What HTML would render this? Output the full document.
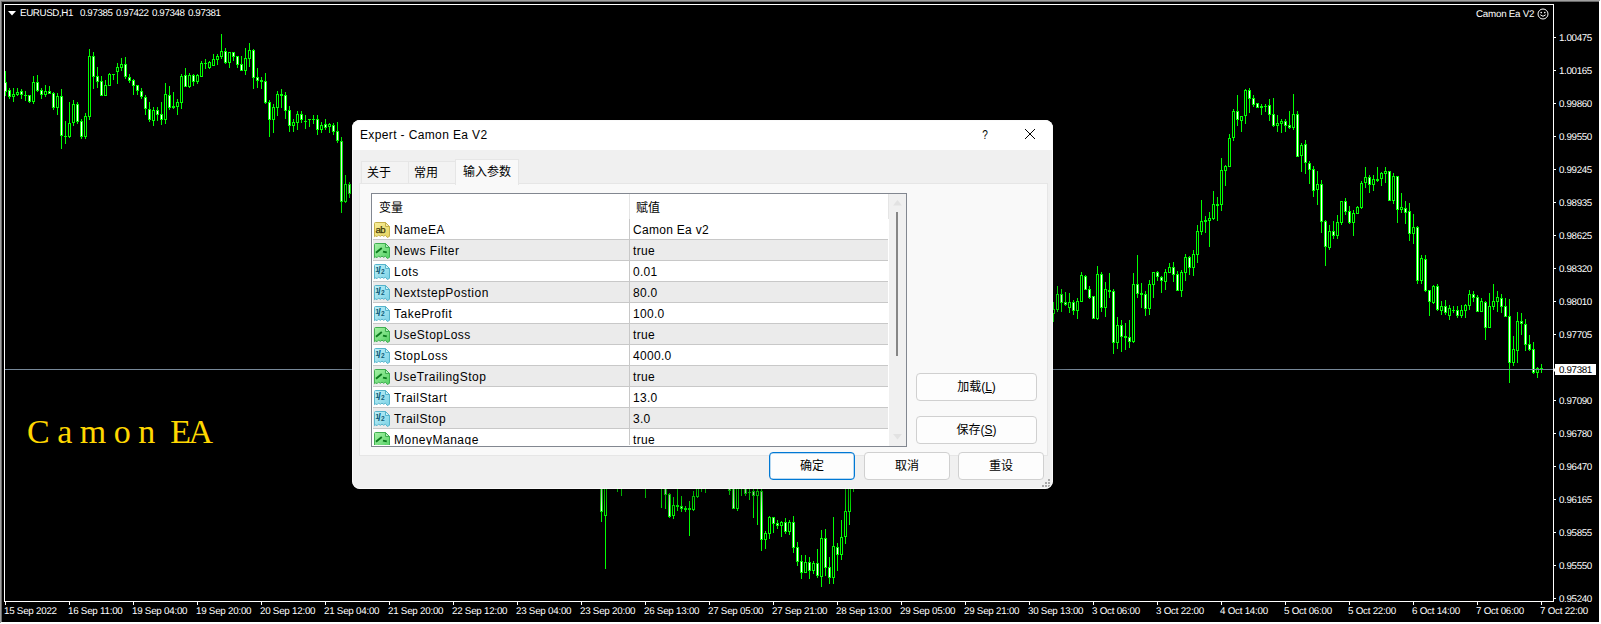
<!DOCTYPE html>
<html lang="zh-CN">
<head>
<meta charset="utf-8">
<title>Expert - Camon Ea V2</title>
<style>
*{box-sizing:border-box;margin:0;padding:0}
html,body{width:1601px;height:624px;overflow:hidden;background:#000}
body{position:relative;font-family:"Liberation Sans","Noto Sans CJK SC",sans-serif;color:#fff}
#win{position:absolute;left:0;top:0;width:1601px;height:624px;background:#000;overflow:hidden}
/* outer 3D edge */
.e{position:absolute;display:block}
#eL0{left:0;top:0;width:1px;height:623px;background:#a0a0a0;z-index:2}
#eL1{left:1px;top:1px;width:1px;height:621px;background:#696969;z-index:2}
#eT0{left:0;top:0;width:1600px;height:1px;background:#a0a0a0;z-index:2}
#eT1{left:1px;top:1px;width:1598px;height:1px;background:#696969;z-index:2}
#eR{left:1599px;top:0;width:2px;height:624px;background:#fff}
#eB{left:0;top:622px;width:1601px;height:2px;background:#fff}
#eC{left:1599px;top:0;width:2px;height:2px;background:#a0a0a0}
#eD{left:0;top:622px;width:2px;height:2px;background:#a0a0a0}
/* chart frame */
#frame{position:absolute;left:4px;top:4px;width:1550px;height:598px;border:1px solid #fff;pointer-events:none}
#chart{position:absolute;left:0;top:0}
.ct{text-rendering:geometricPrecision;position:absolute;font-size:9.8px;line-height:11px;white-space:pre;color:#fff;letter-spacing:-.4px}
.pt{position:absolute;left:1554px;width:2px;height:1px;background:#fff;display:block}
.pl{text-rendering:geometricPrecision;position:absolute;left:1559px;font-size:9.8px;line-height:11px;height:11px;white-space:pre;color:#fff;letter-spacing:-.35px}
.tt{position:absolute;top:602px;width:1px;height:3px;background:#fff;display:block}
.tl{text-rendering:geometricPrecision;position:absolute;top:606px;font-size:9.8px;line-height:11px;height:11px;white-space:pre;color:#fff;letter-spacing:-.25px;margin-left:-1px}
#bid{position:absolute;left:5px;top:369px;width:1548px;height:1px;background:#778899}
#bidbox{text-rendering:geometricPrecision;position:absolute;left:1555px;top:364px;width:41px;height:11px;background:#fff;color:#000;font-size:9.8px;line-height:11px;padding-left:4px;padding-top:1px;white-space:pre;letter-spacing:-.35px}
#bidarr{position:absolute;left:1553px;top:367px;width:0;height:0;border-right:3px solid #fff;border-top:3px solid transparent;border-bottom:3px solid transparent}
#logo{position:absolute;left:27px;top:413px;font-family:"Liberation Serif",serif;font-size:34px;line-height:38px;color:#ffd700;white-space:pre;word-spacing:-1px}
/* dialog */
#dlg{position:absolute;left:352px;top:120px;width:701px;height:369px;background:#f0f0f0;border-radius:8px;overflow:hidden;box-shadow:0 10px 26px 2px rgba(0,0,0,.42);color:#000;font-size:12px}
#ttl{position:absolute;left:0;top:0;width:701px;height:30px;background:#fff}
#ttl span{position:absolute;left:8px;top:7px;line-height:16px;font-size:12px;letter-spacing:.37px;white-space:pre}
.tab{position:absolute;top:41px;height:23px;background:#f3f3f3;border:1px solid #e6e6e6;border-bottom:none;font-size:12px;line-height:14px;text-align:left;white-space:pre}
.tab span{position:absolute;left:5px;top:4px}
#tabA{top:39px;height:26px;background:#f9f9f9;z-index:3}
#tabA span{left:7px;top:5px}
#page{position:absolute;left:7px;top:63px;width:689px;height:273px;background:#f9f9f9;border:1px solid #e6e6e6;z-index:2}
#list{position:absolute;left:19px;top:73px;width:536px;height:254px;background:#fff;border:1px solid #828790;overflow:hidden;z-index:4}
#hdr{position:absolute;left:0;top:0;width:534px;height:25px;background:#fff}
#hdr span{position:absolute;top:7px;font-size:12px;line-height:14px;white-space:pre}
#hdr i{position:absolute;top:0;width:1px;height:25px;background:#e5e5e5;display:block}
.row{position:absolute;left:1px;width:515px;height:21px;border-bottom:1px solid #c8c8c8;background:#fff}
.row.alt{background:#ebebeb}
.row .ic{position:absolute;left:1px;top:3px}
.row .nm{position:absolute;left:21px;top:4px;line-height:14px;font-size:12px;letter-spacing:.5px;white-space:pre}
.row .vl{position:absolute;left:260px;top:4px;line-height:14px;font-size:12px;letter-spacing:.3px;white-space:pre}
#coldiv{position:absolute;left:257px;top:25px;width:1px;height:229px;background:#c8c8c8}
#sb{position:absolute;left:517px;top:0;width:17px;height:252px;background:#f0f0f0}
#sb b{position:absolute;left:7px;top:18px;width:2px;height:144px;background:#868686;display:block}
.btn{position:absolute;height:28px;background:#fdfdfd;border:1px solid #d0d0d0;border-radius:4px;font-size:12px;line-height:26px;text-align:center;white-space:pre}
.btn u{text-decoration:underline}
#ok{border:1px solid #0078d4;box-shadow:inset 0 0 0 .5px rgba(0,120,212,.55)}
#rim{position:absolute;left:0;top:0;width:701px;height:369px;border:1px solid #fafafa;border-radius:8px;z-index:9;pointer-events:none}
</style>
</head>
<body>
<div id="win">
<svg id="chart" width="1601" height="624" viewBox="0 0 1601 624" shape-rendering="crispEdges">
<path fill="#00ff00" d="M5 71h1v25h-1zM9 88h1v11h-1zM13 88h1v14h-1zM17 88h1v8h-1zM21 89h1v10h-1zM25 91h1v10h-1zM29 95h1v8h-1zM33 76h1v28h-1zM37 75h1v17h-1zM41 88h1v11h-1zM45 85h1v12h-1zM49 86h1v8h-1zM53 92h1v18h-1zM57 93h1v22h-1zM61 89h1v60h-1zM65 121h1v23h-1zM69 102h1v36h-1zM73 100h1v26h-1zM77 102h1v22h-1zM81 119h1v20h-1zM85 113h1v26h-1zM89 49h1v71h-1zM93 52h1v37h-1zM97 67h1v21h-1zM101 76h1v20h-1zM105 80h1v16h-1zM109 73h1v13h-1zM113 74h1v6h-1zM117 63h1v21h-1zM121 58h1v13h-1zM125 57h1v22h-1zM129 74h1v9h-1zM133 79h1v16h-1zM137 85h1v10h-1zM141 88h1v11h-1zM145 95h1v20h-1zM149 102h1v20h-1zM153 107h1v19h-1zM157 107h1v14h-1zM161 102h1v23h-1zM165 83h1v41h-1zM169 86h1v24h-1zM173 92h1v17h-1zM177 99h1v16h-1zM181 74h1v35h-1zM185 68h1v19h-1zM189 73h1v15h-1zM193 74h1v12h-1zM197 74h1v10h-1zM201 61h1v16h-1zM205 59h1v10h-1zM209 61h1v8h-1zM213 54h1v12h-1zM217 54h1v11h-1zM221 34h1v25h-1zM225 48h1v16h-1zM229 52h1v16h-1zM233 52h1v9h-1zM237 56h1v12h-1zM241 56h1v15h-1zM245 48h1v27h-1zM249 43h1v24h-1zM253 49h1v40h-1zM257 68h1v20h-1zM261 77h1v12h-1zM265 73h1v31h-1zM269 100h1v37h-1zM273 104h1v29h-1zM277 91h1v25h-1zM281 89h1v19h-1zM285 92h1v27h-1zM289 106h1v26h-1zM293 119h1v13h-1zM297 111h1v19h-1zM301 111h1v12h-1zM305 115h1v14h-1zM309 119h1v8h-1zM313 115h1v9h-1zM317 115h1v20h-1zM321 122h1v11h-1zM325 119h1v11h-1zM329 123h1v10h-1zM333 123h1v12h-1zM337 122h1v21h-1zM341 137h1v76h-1zM345 175h1v28h-1zM349 182h1v16h-1zM601 480h1v42h-1zM605 480h1v89h-1zM617 480h1v12h-1zM621 480h1v16h-1zM645 480h1v18h-1zM661 480h1v28h-1zM665 480h1v29h-1zM669 493h1v25h-1zM673 497h1v22h-1zM677 480h1v31h-1zM681 496h1v16h-1zM685 506h1v6h-1zM689 501h1v35h-1zM693 491h1v20h-1zM697 480h1v18h-1zM701 480h1v12h-1zM705 480h1v13h-1zM729 480h1v15h-1zM733 480h1v29h-1zM737 480h1v31h-1zM741 480h1v16h-1zM745 480h1v16h-1zM749 480h1v20h-1zM753 480h1v38h-1zM757 480h1v45h-1zM761 480h1v71h-1zM765 531h1v18h-1zM769 516h1v23h-1zM773 517h1v16h-1zM777 520h1v9h-1zM781 521h1v16h-1zM785 518h1v16h-1zM789 520h1v15h-1zM793 516h1v37h-1zM797 542h1v24h-1zM801 555h1v24h-1zM805 555h1v18h-1zM809 557h1v22h-1zM813 561h1v13h-1zM817 549h1v29h-1zM821 530h1v57h-1zM825 529h1v47h-1zM829 557h1v27h-1zM833 517h1v67h-1zM837 543h1v28h-1zM841 520h1v40h-1zM845 480h1v64h-1zM849 480h1v45h-1zM853 480h1v12h-1zM1053 302h1v20h-1zM1057 286h1v26h-1zM1061 289h1v23h-1zM1065 292h1v14h-1zM1069 293h1v20h-1zM1073 300h1v15h-1zM1077 298h1v21h-1zM1081 272h1v30h-1zM1085 275h1v15h-1zM1089 286h1v13h-1zM1093 296h1v23h-1zM1097 266h1v54h-1zM1101 272h1v40h-1zM1105 282h1v35h-1zM1109 273h1v25h-1zM1113 289h1v65h-1zM1117 317h1v32h-1zM1121 320h1v32h-1zM1125 323h1v27h-1zM1129 320h1v28h-1zM1133 273h1v70h-1zM1137 255h1v43h-1zM1141 283h1v25h-1zM1145 291h1v25h-1zM1149 280h1v35h-1zM1153 272h1v26h-1zM1157 271h1v10h-1zM1161 276h1v17h-1zM1165 269h1v21h-1zM1169 263h1v10h-1zM1173 262h1v20h-1zM1177 271h1v20h-1zM1181 270h1v27h-1zM1185 254h1v27h-1zM1189 256h1v19h-1zM1193 250h1v26h-1zM1197 225h1v38h-1zM1201 200h1v35h-1zM1205 216h1v17h-1zM1209 212h1v35h-1zM1213 191h1v29h-1zM1217 197h1v24h-1zM1221 158h1v53h-1zM1225 165h1v21h-1zM1229 134h1v33h-1zM1233 109h1v32h-1zM1237 95h1v31h-1zM1241 116h1v16h-1zM1245 89h1v35h-1zM1249 88h1v25h-1zM1253 95h1v12h-1zM1257 103h1v5h-1zM1261 104h1v11h-1zM1265 104h1v8h-1zM1269 99h1v22h-1zM1273 98h1v29h-1zM1277 115h1v17h-1zM1281 119h1v14h-1zM1285 119h1v13h-1zM1289 111h1v18h-1zM1293 94h1v36h-1zM1297 111h1v46h-1zM1301 143h1v29h-1zM1305 140h1v34h-1zM1309 161h1v23h-1zM1313 166h1v31h-1zM1317 171h1v34h-1zM1321 180h1v53h-1zM1325 220h1v46h-1zM1329 225h1v25h-1zM1333 221h1v18h-1zM1337 215h1v24h-1zM1341 201h1v24h-1zM1345 198h1v17h-1zM1349 206h1v18h-1zM1353 210h1v26h-1zM1357 206h1v8h-1zM1361 181h1v28h-1zM1365 167h1v21h-1zM1369 175h1v18h-1zM1373 175h1v16h-1zM1377 167h1v15h-1zM1381 172h1v14h-1zM1385 167h1v16h-1zM1389 171h1v30h-1zM1393 173h1v31h-1zM1397 176h1v47h-1zM1401 193h1v20h-1zM1405 201h1v23h-1zM1409 203h1v38h-1zM1413 214h1v30h-1zM1417 226h1v58h-1zM1421 255h1v29h-1zM1425 255h1v37h-1zM1429 290h1v26h-1zM1433 285h1v19h-1zM1437 284h1v27h-1zM1441 301h1v14h-1zM1445 300h1v15h-1zM1449 305h1v15h-1zM1453 306h1v7h-1zM1457 306h1v12h-1zM1461 305h1v13h-1zM1465 304h1v14h-1zM1469 290h1v20h-1zM1473 291h1v11h-1zM1477 295h1v17h-1zM1481 298h1v14h-1zM1485 301h1v39h-1zM1489 293h1v35h-1zM1493 284h1v26h-1zM1497 291h1v21h-1zM1501 294h1v19h-1zM1505 298h1v19h-1zM1509 299h1v84h-1zM1513 336h1v30h-1zM1517 312h1v51h-1zM1521 313h1v22h-1zM1525 319h1v32h-1zM1529 335h1v16h-1zM1533 342h1v32h-1zM1537 367h1v11h-1zM1541 364h1v9h-1zM4 82h3v10h-3zM8 90h3v7h-3zM12 94h3v3h-3zM16 92h3v3h-3zM20 91h3v4h-3zM24 95h3v1h-3zM28 95h3v7h-3zM32 82h3v20h-3zM36 82h3v9h-3zM40 90h3v5h-3zM44 91h3v4h-3zM48 91h3v3h-3zM52 93h3v15h-3zM56 96h3v12h-3zM60 96h3v40h-3zM64 136h3v1h-3zM68 123h3v14h-3zM72 104h3v19h-3zM76 104h3v18h-3zM80 121h3v16h-3zM84 116h3v21h-3zM88 56h3v61h-3zM92 56h3v21h-3zM96 76h3v6h-3zM100 81h3v15h-3zM104 85h3v11h-3zM108 74h3v12h-3zM112 74h3v1h-3zM116 67h3v5h-3zM120 64h3v4h-3zM124 64h3v13h-3zM128 77h3v4h-3zM132 80h3v6h-3zM136 85h3v6h-3zM140 91h3v6h-3zM144 97h3v12h-3zM148 109h3v11h-3zM152 110h3v11h-3zM156 110h3v5h-3zM160 114h3v6h-3zM164 94h3v26h-3zM168 95h3v13h-3zM172 106h3v2h-3zM176 102h3v5h-3zM180 76h3v27h-3zM184 75h3v12h-3zM188 75h3v12h-3zM192 75h3v7h-3zM196 75h3v7h-3zM200 63h3v14h-3zM204 63h3v1h-3zM208 62h3v6h-3zM212 59h3v7h-3zM216 56h3v4h-3zM220 51h3v6h-3zM224 51h3v12h-3zM228 52h3v11h-3zM232 52h3v5h-3zM236 56h3v9h-3zM240 64h3v7h-3zM244 58h3v13h-3zM248 50h3v9h-3zM252 50h3v28h-3zM256 77h3v4h-3zM260 80h3v2h-3zM264 81h3v22h-3zM268 102h3v18h-3zM272 107h3v13h-3zM276 94h3v14h-3zM280 94h3v2h-3zM284 95h3v16h-3zM288 110h3v16h-3zM292 122h3v4h-3zM296 114h3v9h-3zM300 114h3v6h-3zM304 121h3v1h-3zM308 119h3v1h-3zM312 119h3v1h-3zM316 119h3v11h-3zM320 125h3v5h-3zM324 124h3v4h-3zM328 124h3v3h-3zM332 125h3v7h-3zM336 131h3v10h-3zM340 141h3v61h-3zM344 184h3v18h-3zM348 184h3v10h-3zM600 480h3v32h-3zM604 480h3v36h-3zM616 480h3v1h-3zM620 480h3v1h-3zM644 480h3v1h-3zM660 480h3v1h-3zM664 480h3v15h-3zM668 494h3v23h-3zM672 505h3v11h-3zM676 505h3v2h-3zM680 506h3v3h-3zM684 508h3v2h-3zM688 508h3v2h-3zM692 496h3v14h-3zM696 480h3v17h-3zM700 480h3v1h-3zM704 480h3v1h-3zM728 480h3v11h-3zM732 480h3v29h-3zM736 480h3v29h-3zM740 480h3v1h-3zM744 480h3v14h-3zM748 492h3v1h-3zM752 491h3v5h-3zM756 491h3v5h-3zM760 491h3v49h-3zM764 533h3v7h-3zM768 517h3v17h-3zM772 517h3v7h-3zM776 523h3v3h-3zM780 522h3v4h-3zM784 522h3v10h-3zM788 522h3v10h-3zM792 522h3v26h-3zM796 547h3v15h-3zM800 561h3v12h-3zM804 562h3v11h-3zM808 562h3v9h-3zM812 563h3v8h-3zM816 563h3v13h-3zM820 538h3v39h-3zM824 538h3v30h-3zM828 567h3v11h-3zM832 546h3v32h-3zM836 547h3v8h-3zM840 537h3v18h-3zM844 511h3v26h-3zM848 480h3v32h-3zM852 480h3v1h-3zM1052 309h3v5h-3zM1056 294h3v16h-3zM1060 294h3v9h-3zM1064 302h3v3h-3zM1068 302h3v6h-3zM1072 302h3v9h-3zM1076 301h3v10h-3zM1080 275h3v27h-3zM1084 276h3v14h-3zM1088 289h3v9h-3zM1092 296h3v23h-3zM1096 274h3v45h-3zM1100 274h3v34h-3zM1104 289h3v19h-3zM1108 290h3v2h-3zM1112 291h3v52h-3zM1116 325h3v18h-3zM1120 325h3v12h-3zM1124 336h3v2h-3zM1128 337h3v5h-3zM1132 284h3v58h-3zM1136 284h3v10h-3zM1140 293h3v2h-3zM1144 294h3v15h-3zM1148 284h3v25h-3zM1152 272h3v13h-3zM1156 272h3v5h-3zM1160 277h3v4h-3zM1164 272h3v10h-3zM1168 267h3v6h-3zM1172 267h3v8h-3zM1176 274h3v17h-3zM1180 272h3v19h-3zM1184 257h3v16h-3zM1188 257h3v11h-3zM1192 254h3v14h-3zM1196 231h3v24h-3zM1200 221h3v11h-3zM1204 220h3v2h-3zM1208 218h3v3h-3zM1212 204h3v15h-3zM1216 204h3v2h-3zM1220 170h3v35h-3zM1224 166h3v5h-3zM1228 138h3v29h-3zM1232 111h3v27h-3zM1236 111h3v9h-3zM1240 116h3v5h-3zM1244 90h3v26h-3zM1248 90h3v9h-3zM1252 98h3v7h-3zM1256 103h3v5h-3zM1260 106h3v2h-3zM1264 106h3v1h-3zM1268 105h3v10h-3zM1272 114h3v12h-3zM1276 123h3v3h-3zM1280 121h3v3h-3zM1284 121h3v5h-3zM1288 125h3v3h-3zM1292 114h3v14h-3zM1296 114h3v43h-3zM1300 145h3v11h-3zM1304 144h3v19h-3zM1308 163h3v7h-3zM1312 169h3v22h-3zM1316 184h3v6h-3zM1320 184h3v38h-3zM1324 221h3v26h-3zM1328 231h3v17h-3zM1332 231h3v5h-3zM1336 222h3v14h-3zM1340 201h3v22h-3zM1344 201h3v11h-3zM1348 211h3v12h-3zM1352 213h3v10h-3zM1356 207h3v7h-3zM1360 183h3v25h-3zM1364 177h3v6h-3zM1368 177h3v8h-3zM1372 179h3v6h-3zM1376 179h3v2h-3zM1380 173h3v6h-3zM1384 171h3v3h-3zM1388 171h3v30h-3zM1392 176h3v25h-3zM1396 176h3v34h-3zM1400 207h3v3h-3zM1404 208h3v5h-3zM1408 211h3v23h-3zM1412 227h3v7h-3zM1416 227h3v54h-3zM1420 258h3v23h-3zM1424 259h3v32h-3zM1428 290h3v12h-3zM1432 286h3v17h-3zM1436 286h3v24h-3zM1440 306h3v5h-3zM1444 306h3v7h-3zM1448 308h3v8h-3zM1452 310h3v1h-3zM1456 310h3v6h-3zM1460 310h3v6h-3zM1464 305h3v6h-3zM1468 294h3v12h-3zM1472 294h3v4h-3zM1476 297h3v15h-3zM1480 301h3v11h-3zM1484 302h3v26h-3zM1488 306h3v22h-3zM1492 301h3v6h-3zM1496 297h3v5h-3zM1500 298h3v9h-3zM1504 306h3v11h-3zM1508 316h3v47h-3zM1512 349h3v14h-3zM1516 321h3v30h-3zM1520 321h3v3h-3zM1524 324h3v21h-3zM1528 344h3v6h-3zM1532 349h3v24h-3zM1536 368h3v5h-3zM1540 368h3v2h-3z"/>
<path fill="#000" d="M13 95h1v1h-1zM17 93h1v1h-1zM33 83h1v18h-1zM45 92h1v2h-1zM57 97h1v10h-1zM69 124h1v12h-1zM73 105h1v17h-1zM85 117h1v19h-1zM89 57h1v59h-1zM105 86h1v9h-1zM109 75h1v10h-1zM117 68h1v3h-1zM121 65h1v2h-1zM153 111h1v9h-1zM165 95h1v24h-1zM177 103h1v3h-1zM181 77h1v25h-1zM189 76h1v10h-1zM197 76h1v5h-1zM201 64h1v12h-1zM209 63h1v4h-1zM213 60h1v5h-1zM217 57h1v2h-1zM221 52h1v4h-1zM229 53h1v9h-1zM245 59h1v11h-1zM249 51h1v7h-1zM273 108h1v11h-1zM277 95h1v12h-1zM293 123h1v2h-1zM297 115h1v7h-1zM321 126h1v3h-1zM329 125h1v1h-1zM345 185h1v16h-1zM605 481h1v34h-1zM673 506h1v9h-1zM693 497h1v12h-1zM697 481h1v15h-1zM737 481h1v27h-1zM757 492h1v3h-1zM765 534h1v5h-1zM769 518h1v15h-1zM781 523h1v2h-1zM789 523h1v8h-1zM805 563h1v9h-1zM813 564h1v6h-1zM821 539h1v37h-1zM833 547h1v30h-1zM841 538h1v16h-1zM845 512h1v24h-1zM849 481h1v30h-1zM1053 310h1v3h-1zM1057 295h1v14h-1zM1069 303h1v4h-1zM1077 302h1v8h-1zM1081 276h1v25h-1zM1097 275h1v43h-1zM1105 290h1v17h-1zM1117 326h1v16h-1zM1133 285h1v56h-1zM1149 285h1v23h-1zM1153 273h1v11h-1zM1165 273h1v8h-1zM1169 268h1v4h-1zM1181 273h1v17h-1zM1185 258h1v14h-1zM1193 255h1v12h-1zM1197 232h1v22h-1zM1201 222h1v9h-1zM1209 219h1v1h-1zM1213 205h1v13h-1zM1221 171h1v33h-1zM1225 167h1v3h-1zM1229 139h1v27h-1zM1233 112h1v25h-1zM1241 117h1v3h-1zM1245 91h1v24h-1zM1277 124h1v1h-1zM1281 122h1v1h-1zM1293 115h1v12h-1zM1301 146h1v9h-1zM1317 185h1v4h-1zM1329 232h1v15h-1zM1337 223h1v12h-1zM1341 202h1v20h-1zM1353 214h1v8h-1zM1357 208h1v5h-1zM1361 184h1v23h-1zM1365 178h1v4h-1zM1373 180h1v4h-1zM1381 174h1v4h-1zM1385 172h1v1h-1zM1393 177h1v23h-1zM1401 208h1v1h-1zM1413 228h1v5h-1zM1421 259h1v21h-1zM1433 287h1v15h-1zM1441 307h1v3h-1zM1449 309h1v6h-1zM1461 311h1v4h-1zM1465 306h1v4h-1zM1469 295h1v10h-1zM1481 302h1v9h-1zM1489 307h1v20h-1zM1493 302h1v4h-1zM1497 298h1v3h-1zM1513 350h1v12h-1zM1517 322h1v28h-1zM1537 369h1v3h-1z"/>
<path fill="#fff" d="M5 83h1v8h-1zM9 91h1v5h-1zM21 92h1v2h-1zM29 96h1v5h-1zM37 83h1v7h-1zM41 91h1v3h-1zM49 92h1v1h-1zM53 94h1v13h-1zM61 97h1v38h-1zM77 105h1v16h-1zM81 122h1v14h-1zM93 57h1v19h-1zM97 77h1v4h-1zM101 82h1v13h-1zM125 65h1v11h-1zM129 78h1v2h-1zM133 81h1v4h-1zM137 86h1v4h-1zM141 92h1v4h-1zM145 98h1v10h-1zM149 110h1v9h-1zM157 111h1v3h-1zM161 115h1v4h-1zM169 96h1v11h-1zM185 76h1v10h-1zM193 76h1v5h-1zM225 52h1v10h-1zM233 53h1v3h-1zM237 57h1v7h-1zM241 65h1v5h-1zM253 51h1v26h-1zM257 78h1v2h-1zM265 82h1v20h-1zM269 103h1v16h-1zM285 96h1v14h-1zM289 111h1v14h-1zM301 115h1v4h-1zM317 120h1v9h-1zM325 125h1v2h-1zM333 126h1v5h-1zM337 132h1v8h-1zM341 142h1v59h-1zM349 185h1v8h-1zM601 481h1v30h-1zM665 481h1v13h-1zM669 495h1v21h-1zM681 507h1v1h-1zM729 481h1v9h-1zM733 481h1v27h-1zM745 481h1v12h-1zM753 492h1v3h-1zM761 492h1v47h-1zM773 518h1v5h-1zM777 524h1v1h-1zM785 523h1v8h-1zM793 523h1v24h-1zM797 548h1v13h-1zM801 562h1v10h-1zM809 563h1v7h-1zM817 564h1v11h-1zM825 539h1v28h-1zM829 568h1v9h-1zM837 548h1v6h-1zM1061 295h1v7h-1zM1065 303h1v1h-1zM1073 303h1v7h-1zM1085 277h1v12h-1zM1089 290h1v7h-1zM1093 297h1v21h-1zM1101 275h1v32h-1zM1113 292h1v50h-1zM1121 326h1v10h-1zM1129 338h1v3h-1zM1137 285h1v8h-1zM1145 295h1v13h-1zM1157 273h1v3h-1zM1161 278h1v2h-1zM1173 268h1v6h-1zM1177 275h1v15h-1zM1189 258h1v9h-1zM1237 112h1v7h-1zM1249 91h1v7h-1zM1253 99h1v5h-1zM1257 104h1v3h-1zM1269 106h1v8h-1zM1273 115h1v10h-1zM1285 122h1v3h-1zM1289 126h1v1h-1zM1297 115h1v41h-1zM1305 145h1v17h-1zM1309 164h1v5h-1zM1313 170h1v20h-1zM1321 185h1v36h-1zM1325 222h1v24h-1zM1333 232h1v3h-1zM1345 202h1v9h-1zM1349 212h1v10h-1zM1369 178h1v6h-1zM1389 172h1v28h-1zM1397 177h1v32h-1zM1405 209h1v3h-1zM1409 212h1v21h-1zM1417 228h1v52h-1zM1425 260h1v30h-1zM1429 291h1v10h-1zM1437 287h1v22h-1zM1445 307h1v5h-1zM1457 311h1v4h-1zM1473 295h1v2h-1zM1477 298h1v13h-1zM1485 303h1v24h-1zM1501 299h1v7h-1zM1505 307h1v9h-1zM1509 317h1v45h-1zM1521 322h1v1h-1zM1525 325h1v19h-1zM1529 345h1v4h-1zM1533 350h1v22h-1z"/>
</svg>
<div id="bid"></div>
<i class="e" id="eT0"></i><i class="e" id="eT1"></i><i class="e" id="eL0"></i><i class="e" id="eL1"></i><i class="e" id="eR"></i><i class="e" id="eB"></i>
<div id="frame"></div>
<svg style="position:absolute;left:8px;top:11px" width="8" height="5" viewBox="0 0 8 5"><path d="M0 0h8L4 4.5z" fill="#fff"/></svg>
<span class="ct" style="left:20px;top:8px">EURUSD,H1</span>
<span class="ct" style="left:80px;top:8px">0.97385</span>
<span class="ct" style="left:116px;top:8px">0.97422</span>
<span class="ct" style="left:152px;top:8px">0.97348</span>
<span class="ct" style="left:188px;top:8px">0.97381</span>
<span class="ct" style="left:1476px;top:9px;letter-spacing:-.25px">Camon Ea V2</span>
<svg style="position:absolute;left:1537px;top:8px" width="12" height="12" viewBox="0 0 12 12"><circle cx="6" cy="6" r="5" fill="none" stroke="#fff" stroke-width="1"/><circle cx="4.2" cy="4.6" r=".8" fill="#fff"/><circle cx="7.8" cy="4.6" r=".8" fill="#fff"/><path d="M3.3 6.8q2.7 3 5.4 0" fill="none" stroke="#fff" stroke-width="1"/></svg>
<i class="pt" style="top:37px"></i><span class="pl" style="top:33px">1.00475</span>
<i class="pt" style="top:70px"></i><span class="pl" style="top:66px">1.00165</span>
<i class="pt" style="top:103px"></i><span class="pl" style="top:99px">0.99860</span>
<i class="pt" style="top:136px"></i><span class="pl" style="top:132px">0.99550</span>
<i class="pt" style="top:169px"></i><span class="pl" style="top:165px">0.99245</span>
<i class="pt" style="top:202px"></i><span class="pl" style="top:198px">0.98935</span>
<i class="pt" style="top:235px"></i><span class="pl" style="top:231px">0.98625</span>
<i class="pt" style="top:268px"></i><span class="pl" style="top:264px">0.98320</span>
<i class="pt" style="top:301px"></i><span class="pl" style="top:297px">0.98010</span>
<i class="pt" style="top:334px"></i><span class="pl" style="top:330px">0.97705</span>
<i class="pt" style="top:400px"></i><span class="pl" style="top:396px">0.97090</span>
<i class="pt" style="top:433px"></i><span class="pl" style="top:429px">0.96780</span>
<i class="pt" style="top:466px"></i><span class="pl" style="top:462px">0.96470</span>
<i class="pt" style="top:499px"></i><span class="pl" style="top:495px">0.96165</span>
<i class="pt" style="top:532px"></i><span class="pl" style="top:528px">0.95855</span>
<i class="pt" style="top:565px"></i><span class="pl" style="top:561px">0.95550</span>
<i class="pt" style="top:598px"></i><span class="pl" style="top:594px">0.95240</span>
<i class="tt" style="left:5px"></i><span class="tl" style="left:5px">15 Sep 2022</span>
<i class="tt" style="left:69px"></i><span class="tl" style="left:69px">16 Sep 11:00</span>
<i class="tt" style="left:133px"></i><span class="tl" style="left:133px">19 Sep 04:00</span>
<i class="tt" style="left:197px"></i><span class="tl" style="left:197px">19 Sep 20:00</span>
<i class="tt" style="left:261px"></i><span class="tl" style="left:261px">20 Sep 12:00</span>
<i class="tt" style="left:325px"></i><span class="tl" style="left:325px">21 Sep 04:00</span>
<i class="tt" style="left:389px"></i><span class="tl" style="left:389px">21 Sep 20:00</span>
<i class="tt" style="left:453px"></i><span class="tl" style="left:453px">22 Sep 12:00</span>
<i class="tt" style="left:517px"></i><span class="tl" style="left:517px">23 Sep 04:00</span>
<i class="tt" style="left:581px"></i><span class="tl" style="left:581px">23 Sep 20:00</span>
<i class="tt" style="left:645px"></i><span class="tl" style="left:645px">26 Sep 13:00</span>
<i class="tt" style="left:709px"></i><span class="tl" style="left:709px">27 Sep 05:00</span>
<i class="tt" style="left:773px"></i><span class="tl" style="left:773px">27 Sep 21:00</span>
<i class="tt" style="left:837px"></i><span class="tl" style="left:837px">28 Sep 13:00</span>
<i class="tt" style="left:901px"></i><span class="tl" style="left:901px">29 Sep 05:00</span>
<i class="tt" style="left:965px"></i><span class="tl" style="left:965px">29 Sep 21:00</span>
<i class="tt" style="left:1029px"></i><span class="tl" style="left:1029px">30 Sep 13:00</span>
<i class="tt" style="left:1093px"></i><span class="tl" style="left:1093px">3 Oct 06:00</span>
<i class="tt" style="left:1157px"></i><span class="tl" style="left:1157px">3 Oct 22:00</span>
<i class="tt" style="left:1221px"></i><span class="tl" style="left:1221px">4 Oct 14:00</span>
<i class="tt" style="left:1285px"></i><span class="tl" style="left:1285px">5 Oct 06:00</span>
<i class="tt" style="left:1349px"></i><span class="tl" style="left:1349px">5 Oct 22:00</span>
<i class="tt" style="left:1413px"></i><span class="tl" style="left:1413px">6 Oct 14:00</span>
<i class="tt" style="left:1477px"></i><span class="tl" style="left:1477px">7 Oct 06:00</span>
<i class="tt" style="left:1541px"></i><span class="tl" style="left:1541px">7 Oct 22:00</span>
<div id="bidarr"></div>
<div id="bidbox">0.97381</div>
<div id="logo">C a m o n  <span style="letter-spacing:-2.5px">E</span>A</div>

<div id="dlg">
 <div id="ttl"><span>Expert - Camon Ea V2</span>
  <svg style="position:absolute;left:630px;top:8px" width="8" height="12" viewBox="0 0 8 12"><text x="0.3" y="10.6" font-family="Liberation Sans, sans-serif" font-size="12.5" fill="#000" textLength="5.6" lengthAdjust="spacingAndGlyphs">?</text></svg>
  <svg style="position:absolute;left:672px;top:8px" width="12" height="12" viewBox="0 0 12 12"><path d="M1 1l10 10M11 1L1 11" stroke="#000" stroke-width="1" fill="none"/></svg>
 </div>
 <div class="tab" style="left:9px;width:48px"><span>关于</span></div>
 <div class="tab" style="left:56px;width:48px"><span>常用</span></div>
 <div class="tab" id="tabA" style="left:103px;width:64px"><span>输入参数</span></div>
 <div id="page"></div>
 <div id="list">
  <div id="hdr"><span style="left:7px">变量</span><i style="left:257px"></i><span style="left:264px">赋值</span><i style="left:516px"></i></div>
<div class="row" style="top:25px"><svg class="ic" width="16" height="16" viewBox="0 0 16 16"><path d="M.5 1.5Q.5 .5 1.5 .5H11.5L15.5 4.5V14.3L13.4 15.5 11.4 13.2 9.6 14.3 8 13.1 6.3 14.3 4.6 13.1 3 14.7 1.8 13.8 .5 14.7Z" fill="url(#gy)" stroke="#c4b04a" stroke-width="1" stroke-linejoin="round"/> <path d="M11.5 .5V4.5H15.5Z" fill="#f4ecb0" stroke="#c4b04a" stroke-width="1" stroke-linejoin="round"/> <text x="1.5" y="10.8" font-family="Liberation Sans, sans-serif" font-size="9.6" fill="#3c3604" stroke="#3c3604" stroke-width=".25" letter-spacing="-.6">ab</text></svg><span class="nm">NameEA</span><span class="vl">Camon Ea v2</span></div>
<div class="row alt" style="top:46px"><svg class="ic" width="16" height="16" viewBox="0 0 16 16"><path d="M.5 1.5Q.5 .5 1.5 .5H11.5L15.5 4.5V14.3L13.4 15.5 11.4 13.2 9.6 14.3 8 13.1 6.3 14.3 4.6 13.1 3 14.7 1.8 13.8 .5 14.7Z" fill="url(#gg)" stroke="#3fae50" stroke-width="1" stroke-linejoin="round"/> <path d="M11.5 .5V4.5H15.5Z" fill="#b4f0bc" stroke="#3fae50" stroke-width="1" stroke-linejoin="round"/> <path d="M2 9.7L7.8 5M9 8.6L12.8 9.4" stroke="#0c7a1e" stroke-width="1.9" fill="none"/></svg><span class="nm">News Filter</span><span class="vl">true</span></div>
<div class="row" style="top:67px"><svg class="ic" width="16" height="16" viewBox="0 0 16 16"><path d="M.5 1.5Q.5 .5 1.5 .5H11.5L15.5 4.5V14.3L13.4 15.5 11.4 13.2 9.6 14.3 8 13.1 6.3 14.3 4.6 13.1 3 14.7 1.8 13.8 .5 14.7Z" fill="url(#gc)" stroke="#56b4cc" stroke-width="1" stroke-linejoin="round"/> <path d="M11.5 .5V4.5H15.5Z" fill="#ccf2f8" stroke="#56b4cc" stroke-width="1" stroke-linejoin="round"/> <text x="1.2" y="8.2" font-family="Liberation Sans, sans-serif" font-size="7.4" font-weight="bold" fill="#0e5c7a">1</text> <text x="4" y="9.8" font-family="Liberation Sans, sans-serif" font-size="10" font-weight="bold" fill="#0e5c7a">/</text> <text x="6.9" y="10.2" font-family="Liberation Sans, sans-serif" font-size="6.6" font-weight="bold" fill="#0e5c7a">2</text></svg><span class="nm">Lots</span><span class="vl">0.01</span></div>
<div class="row alt" style="top:88px"><svg class="ic" width="16" height="16" viewBox="0 0 16 16"><path d="M.5 1.5Q.5 .5 1.5 .5H11.5L15.5 4.5V14.3L13.4 15.5 11.4 13.2 9.6 14.3 8 13.1 6.3 14.3 4.6 13.1 3 14.7 1.8 13.8 .5 14.7Z" fill="url(#gc)" stroke="#56b4cc" stroke-width="1" stroke-linejoin="round"/> <path d="M11.5 .5V4.5H15.5Z" fill="#ccf2f8" stroke="#56b4cc" stroke-width="1" stroke-linejoin="round"/> <text x="1.2" y="8.2" font-family="Liberation Sans, sans-serif" font-size="7.4" font-weight="bold" fill="#0e5c7a">1</text> <text x="4" y="9.8" font-family="Liberation Sans, sans-serif" font-size="10" font-weight="bold" fill="#0e5c7a">/</text> <text x="6.9" y="10.2" font-family="Liberation Sans, sans-serif" font-size="6.6" font-weight="bold" fill="#0e5c7a">2</text></svg><span class="nm">NextstepPostion</span><span class="vl">80.0</span></div>
<div class="row" style="top:109px"><svg class="ic" width="16" height="16" viewBox="0 0 16 16"><path d="M.5 1.5Q.5 .5 1.5 .5H11.5L15.5 4.5V14.3L13.4 15.5 11.4 13.2 9.6 14.3 8 13.1 6.3 14.3 4.6 13.1 3 14.7 1.8 13.8 .5 14.7Z" fill="url(#gc)" stroke="#56b4cc" stroke-width="1" stroke-linejoin="round"/> <path d="M11.5 .5V4.5H15.5Z" fill="#ccf2f8" stroke="#56b4cc" stroke-width="1" stroke-linejoin="round"/> <text x="1.2" y="8.2" font-family="Liberation Sans, sans-serif" font-size="7.4" font-weight="bold" fill="#0e5c7a">1</text> <text x="4" y="9.8" font-family="Liberation Sans, sans-serif" font-size="10" font-weight="bold" fill="#0e5c7a">/</text> <text x="6.9" y="10.2" font-family="Liberation Sans, sans-serif" font-size="6.6" font-weight="bold" fill="#0e5c7a">2</text></svg><span class="nm">TakeProfit</span><span class="vl">100.0</span></div>
<div class="row alt" style="top:130px"><svg class="ic" width="16" height="16" viewBox="0 0 16 16"><path d="M.5 1.5Q.5 .5 1.5 .5H11.5L15.5 4.5V14.3L13.4 15.5 11.4 13.2 9.6 14.3 8 13.1 6.3 14.3 4.6 13.1 3 14.7 1.8 13.8 .5 14.7Z" fill="url(#gg)" stroke="#3fae50" stroke-width="1" stroke-linejoin="round"/> <path d="M11.5 .5V4.5H15.5Z" fill="#b4f0bc" stroke="#3fae50" stroke-width="1" stroke-linejoin="round"/> <path d="M2 9.7L7.8 5M9 8.6L12.8 9.4" stroke="#0c7a1e" stroke-width="1.9" fill="none"/></svg><span class="nm">UseStopLoss</span><span class="vl">true</span></div>
<div class="row" style="top:151px"><svg class="ic" width="16" height="16" viewBox="0 0 16 16"><path d="M.5 1.5Q.5 .5 1.5 .5H11.5L15.5 4.5V14.3L13.4 15.5 11.4 13.2 9.6 14.3 8 13.1 6.3 14.3 4.6 13.1 3 14.7 1.8 13.8 .5 14.7Z" fill="url(#gc)" stroke="#56b4cc" stroke-width="1" stroke-linejoin="round"/> <path d="M11.5 .5V4.5H15.5Z" fill="#ccf2f8" stroke="#56b4cc" stroke-width="1" stroke-linejoin="round"/> <text x="1.2" y="8.2" font-family="Liberation Sans, sans-serif" font-size="7.4" font-weight="bold" fill="#0e5c7a">1</text> <text x="4" y="9.8" font-family="Liberation Sans, sans-serif" font-size="10" font-weight="bold" fill="#0e5c7a">/</text> <text x="6.9" y="10.2" font-family="Liberation Sans, sans-serif" font-size="6.6" font-weight="bold" fill="#0e5c7a">2</text></svg><span class="nm">StopLoss</span><span class="vl">4000.0</span></div>
<div class="row alt" style="top:172px"><svg class="ic" width="16" height="16" viewBox="0 0 16 16"><path d="M.5 1.5Q.5 .5 1.5 .5H11.5L15.5 4.5V14.3L13.4 15.5 11.4 13.2 9.6 14.3 8 13.1 6.3 14.3 4.6 13.1 3 14.7 1.8 13.8 .5 14.7Z" fill="url(#gg)" stroke="#3fae50" stroke-width="1" stroke-linejoin="round"/> <path d="M11.5 .5V4.5H15.5Z" fill="#b4f0bc" stroke="#3fae50" stroke-width="1" stroke-linejoin="round"/> <path d="M2 9.7L7.8 5M9 8.6L12.8 9.4" stroke="#0c7a1e" stroke-width="1.9" fill="none"/></svg><span class="nm">UseTrailingStop</span><span class="vl">true</span></div>
<div class="row" style="top:193px"><svg class="ic" width="16" height="16" viewBox="0 0 16 16"><path d="M.5 1.5Q.5 .5 1.5 .5H11.5L15.5 4.5V14.3L13.4 15.5 11.4 13.2 9.6 14.3 8 13.1 6.3 14.3 4.6 13.1 3 14.7 1.8 13.8 .5 14.7Z" fill="url(#gc)" stroke="#56b4cc" stroke-width="1" stroke-linejoin="round"/> <path d="M11.5 .5V4.5H15.5Z" fill="#ccf2f8" stroke="#56b4cc" stroke-width="1" stroke-linejoin="round"/> <text x="1.2" y="8.2" font-family="Liberation Sans, sans-serif" font-size="7.4" font-weight="bold" fill="#0e5c7a">1</text> <text x="4" y="9.8" font-family="Liberation Sans, sans-serif" font-size="10" font-weight="bold" fill="#0e5c7a">/</text> <text x="6.9" y="10.2" font-family="Liberation Sans, sans-serif" font-size="6.6" font-weight="bold" fill="#0e5c7a">2</text></svg><span class="nm">TrailStart</span><span class="vl">13.0</span></div>
<div class="row alt" style="top:214px"><svg class="ic" width="16" height="16" viewBox="0 0 16 16"><path d="M.5 1.5Q.5 .5 1.5 .5H11.5L15.5 4.5V14.3L13.4 15.5 11.4 13.2 9.6 14.3 8 13.1 6.3 14.3 4.6 13.1 3 14.7 1.8 13.8 .5 14.7Z" fill="url(#gc)" stroke="#56b4cc" stroke-width="1" stroke-linejoin="round"/> <path d="M11.5 .5V4.5H15.5Z" fill="#ccf2f8" stroke="#56b4cc" stroke-width="1" stroke-linejoin="round"/> <text x="1.2" y="8.2" font-family="Liberation Sans, sans-serif" font-size="7.4" font-weight="bold" fill="#0e5c7a">1</text> <text x="4" y="9.8" font-family="Liberation Sans, sans-serif" font-size="10" font-weight="bold" fill="#0e5c7a">/</text> <text x="6.9" y="10.2" font-family="Liberation Sans, sans-serif" font-size="6.6" font-weight="bold" fill="#0e5c7a">2</text></svg><span class="nm">TrailStop</span><span class="vl">3.0</span></div>
<div class="row" style="top:235px"><svg class="ic" width="16" height="16" viewBox="0 0 16 16"><path d="M.5 1.5Q.5 .5 1.5 .5H11.5L15.5 4.5V14.3L13.4 15.5 11.4 13.2 9.6 14.3 8 13.1 6.3 14.3 4.6 13.1 3 14.7 1.8 13.8 .5 14.7Z" fill="url(#gg)" stroke="#3fae50" stroke-width="1" stroke-linejoin="round"/> <path d="M11.5 .5V4.5H15.5Z" fill="#b4f0bc" stroke="#3fae50" stroke-width="1" stroke-linejoin="round"/> <path d="M2 9.7L7.8 5M9 8.6L12.8 9.4" stroke="#0c7a1e" stroke-width="1.9" fill="none"/></svg><span class="nm">MoneyManage</span><span class="vl">true</span></div>
  <div id="coldiv"></div>
  <div style="position:absolute;left:0;top:251px;width:517px;height:1px;background:#fff;z-index:3"></div>
  <div id="sb"><b></b>
   <svg style="position:absolute;left:4px;top:6px" width="9" height="6" viewBox="0 0 9 6"><path d="M0 5.5L4.5 0 9 5.5z" fill="#e2e2e2"/></svg>
   <svg style="position:absolute;left:4px;top:240px" width="9" height="6" viewBox="0 0 9 6"><path d="M0 0L4.5 5.5 9 0z" fill="#e2e2e2"/></svg>
  </div>
 </div>
 <div class="btn" style="left:564px;top:253px;width:121px;z-index:5">加载(<u>L</u>)</div>
 <div class="btn" style="left:564px;top:296px;width:121px;z-index:5">保存(<u>S</u>)</div>
 <div class="btn" id="ok" style="left:417px;top:332px;width:86px;z-index:5">确定</div>
 <div class="btn" style="left:512px;top:332px;width:86px;z-index:5">取消</div>
 <div class="btn" style="left:606px;top:332px;width:86px;z-index:5">重设</div>
 <svg style="position:absolute;left:689px;top:358px;z-index:6" width="10" height="10" viewBox="0 0 10 10" shape-rendering="crispEdges"><path d="M7 1h2v2h-2zM4 4h2v2h-2zM7 4h2v2h-2zM1 7h2v2h-2zM4 7h2v2h-2zM7 7h2v2h-2z" fill="#a9a9a9"/></svg>
 <div id="rim"></div>
</div>

<svg width="0" height="0" style="position:absolute" aria-hidden="true">
 <linearGradient id="gy" x1="0" y1="0" x2="1" y2="1"><stop offset="0" stop-color="#f8ee9c"/><stop offset="1" stop-color="#e6d45e"/></linearGradient>
 <linearGradient id="gg" x1="0" y1="0" x2="1" y2="1"><stop offset="0" stop-color="#a6f2a6"/><stop offset="1" stop-color="#54d064"/></linearGradient>
 <linearGradient id="gc" x1="0" y1="0" x2="1" y2="1"><stop offset="0" stop-color="#c0f0f6"/><stop offset="1" stop-color="#7cd2e6"/></linearGradient>
</svg>
</div>
</body>
</html>
